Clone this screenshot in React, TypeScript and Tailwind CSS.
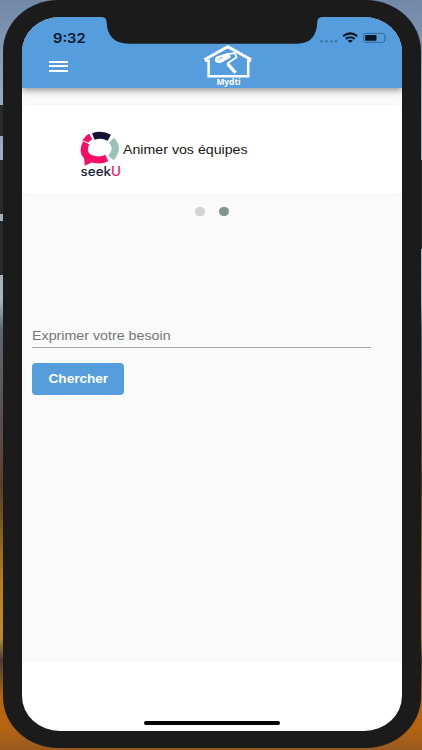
function StatusBar() {
  return (
    <div className="flex h-[27px] items-start justify-between pl-[31px] pr-[13px]">
      <span className="mt-[12px] block h-[18px] w-[34px] origin-left scale-x-[1.13] whitespace-nowrap text-[13px] font-semibold leading-[18px] text-[#071525] font-['Inter','Liberation_Sans',sans-serif]">
        9:32
      </span>
      <svg className="mt-[13px]" width="70" height="16" viewBox="0 0 70 16">
        <g fill="#3b76a9">
          <circle cx="2.5" cy="11.3" r="1.3" />
          <circle cx="7.5" cy="11.3" r="1.3" />
          <circle cx="12.3" cy="11.3" r="1.3" />
          <circle cx="16.9" cy="11.3" r="1.3" />
        </g>
        <g fill="none" stroke="#071525" strokeWidth="2">
          <path d="M24.1 6.3Q31.2 0.5 38.3 6.3" />
          <path d="M26.8 8.9Q31.2 5.5 35.7 8.9" />
        </g>
        <path d="M28.7 10.7Q31.2 8.9 33.8 10.7L31.2 12.7Z" fill="#071525" />
        <rect x="44.6" y="3.4" width="21.2" height="9" rx="2.4" fill="none" stroke="#34658f" strokeWidth="0.9" />
        <rect x="46.2" y="5" width="11.3" height="5.8" rx="0.8" fill="#071525" />
        <path d="M66.7 6.2Q68.2 7.8 66.7 9.5Z" fill="#34658f" />
      </svg>
    </div>
  );
}

function HouseLogo() {
  return (
    <div className="flex w-[50px] flex-col items-center">
      <svg width="50" height="34" viewBox="0 0 50 34" fill="none" stroke="#fff">
        <path d="M1.4 15.8L24.8 2.8L48.2 15.8" strokeWidth="3" />
        <path d="M2 16.8H5.6V32.3H45.2V16.8H48" strokeWidth="2.5" />
        <path d="M13.5 12.6L25.5 8.8L28 13.2L18.6 18.5Q13.8 20.2 11.9 17Q11.4 14.2 13.5 12.6Z" fill="#fff" stroke="none" />
        <path d="M15.4 16.2Q17 13.8 19.8 13.6" stroke="#559ddc" strokeWidth="0.9" />
        <path d="M24.4 10.2L31.8 9.2L33.6 13.2L24.6 19.2L25.6 20.8" strokeWidth="1.7" strokeLinejoin="round" />
        <path d="M24.6 19.8L32.6 28.8" strokeWidth="3.3" />
      </svg>
      <span className="-mt-px block h-[9px] translate-x-[1px] scale-x-[1.05] text-[8px] font-bold leading-[9px] text-white font-['Open_Sans','Noto_Sans',sans-serif]">
        Mydti
      </span>
    </div>
  );
}

function Header() {
  return (
    <header className="relative z-10 h-[71px] shrink-0 bg-[#559ddc] shadow-[0_2px_7px_rgba(0,0,0,0.45)]">
      <StatusBar />
      <div className="flex h-[44px] items-start pl-[27px]">
        <div className="mt-[17px] flex w-[19px] flex-col gap-[2.4px]">
          <i className="h-[2px] bg-white" />
          <i className="h-[2px] bg-white" />
          <i className="h-[2px] bg-white" />
        </div>
        <div className="ml-[135px]">
          <HouseLogo />
        </div>
      </div>
      <svg className="absolute left-[79px] top-0" width="222" height="27" viewBox="0 0 222 27">
        <path d="M0 0Q5.6 0 5.6 5Q6.4 26.7 28 26.7H196Q215.5 26.7 216.3 5Q216.3 0 222 0Z" fill="#1b1b1b" />
      </svg>
    </header>
  );
}

function SeekULogo() {
  return (
    <div className="w-[42px]">
      <svg width="42" height="36" viewBox="0 0 42 36">
        <g fill="none" strokeWidth="7">
          <path d="M13.3 5.5Q21.5 2.5 29.3 6.8" stroke="#151436" />
          <path d="M31.4 9.2Q39.4 17.5 31 27" stroke="#9ac0ba" />
          <path d="M6.2 11.7Q0.9 22.5 10 27Q19 30.8 26.8 27" stroke="#f70e66" />
        </g>
        <path d="M2.5 9.2Q5 4.9 9.2 2.5L12.2 8.2L8.2 11.6Z" fill="#f70e66" />
        <path d="M3.8 24L4.8 34.8L13.5 30.5Z" fill="#f70e66" />
      </svg>
      <span className="-mt-[2px] block h-[14px] w-[36px] origin-left translate-x-[0.5px] scale-x-[1.05] whitespace-nowrap text-[12.8px] font-medium leading-[14px] text-[#191c3e] font-['Inter','Liberation_Sans',sans-serif]">
        seek<span className="text-[#f70e66]">U</span>
      </span>
    </div>
  );
}

export default function App() {
  return (
    <div className="relative h-[750px] w-full overflow-hidden bg-[linear-gradient(180deg,#7188a6_0%,#94a9c2_13%,#a9b6bd_40%,#5e6773_44%,#5c4a48_58%,#5b4025_65%,#b98218_78%,#bd8b2e_85%,#4c3a36_88%,#b76510_93%,#b56412_97%,#985a20_100%)] font-['Liberation_Sans',Arial,sans-serif]">
      <i className="absolute left-0 top-[105px] h-[31px] w-[3px] bg-[#292929]" />
      <i className="absolute left-0 top-[160px] h-[54px] w-[3px] bg-[#292929]" />
      <i className="absolute left-0 top-[221px] h-[54px] w-[3px] bg-[#292929]" />
      <i className="absolute right-0 top-[160px] h-[89px] w-[3px] bg-[#292929]" />
      <div className="relative ml-[2.5px] h-[748px] w-[418px] rounded-[55px/51px] bg-[#1b1b1b] pl-[19.5px] pt-[17px]">
        <div className="flex h-[714px] w-[380px] flex-col overflow-hidden rounded-[38px/35px] bg-white">
          <Header />
          <main className="h-[574px] shrink-0 bg-[#fafafa] pt-[17px]">
            <section className="flex h-[88.5px] items-start rounded-[6px] bg-white pl-[58px] pt-[26px] shadow-[0_0_2px_rgba(0,0,0,0.07)]">
              <SeekULogo />
              <span className="ml-[1px] mt-[11px] block origin-left scale-x-[1.135] whitespace-nowrap text-[12.5px] leading-[16px] text-[#161616]">
                Animer vos équipes
              </span>
            </section>
            <div className="ml-[173px] mt-[13px] flex gap-[14px]">
              <i className="h-[9px] w-[10px] rounded-full bg-[#d4d4d4]" />
              <i className="h-[9px] w-[10px] rounded-full bg-[#82958f]" />
            </div>
            <div className="ml-[10px] mt-[112.5px] h-[20px] w-[339px] border-b border-[#a6a6a6]">
              <span className="block w-[120px] origin-left scale-x-[1.14] whitespace-nowrap text-[12.5px] leading-[16px] text-[#757575]">
                Exprimer votre besoin
              </span>
            </div>
            <button className="ml-[10px] mt-[15px] flex h-[32px] w-[92px] items-center justify-center rounded-[4px] bg-[#559ddc] text-white">
              <span className="block scale-x-[1.13] text-[12px] font-bold leading-[16px]">Chercher</span>
            </button>
          </main>
          <div className="mx-auto mt-[58.5px] h-[4px] w-[136px] shrink-0 rounded-full bg-black" />
        </div>
      </div>
    </div>
  );
}
